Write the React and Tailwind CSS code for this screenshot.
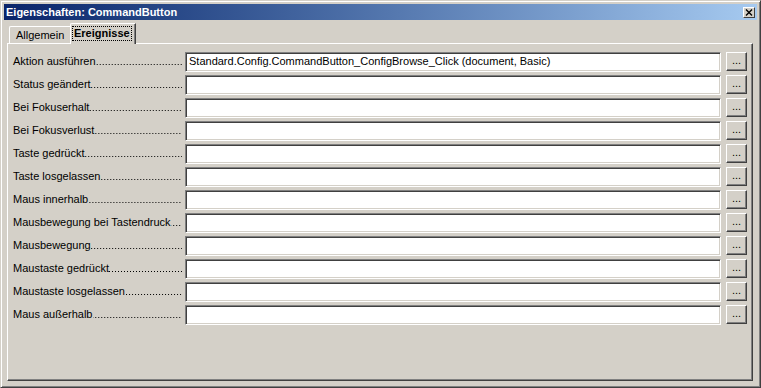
import React from "react";

const rows = [
  ["Aktion ausführen", "Standard.Config.CommandButton_ConfigBrowse_Click (document, Basic)"],
  ["Status geändert", ""],
  ["Bei Fokuserhalt", ""],
  ["Bei Fokusverlust", ""],
  ["Taste gedrückt", ""],
  ["Taste losgelassen", ""],
  ["Maus innerhalb", ""],
  ["Mausbewegung bei Tastendruck", ""],
  ["Mausbewegung", ""],
  ["Maustaste gedrückt", ""],
  ["Maustaste losgelassen", ""],
  ["Maus außerhalb", ""],
];

function Row({ label, value }) {
  return (
    <div className="flex items-center h-[23px]">
      <div className="w-[169px] flex items-baseline whitespace-nowrap text-black">
        <span>{label}</span>
        <span className="flex-1 h-[9px] self-baseline bg-[linear-gradient(to_right,transparent_1px,black_1px,black_2px,transparent_2px)] bg-[length:3px_1px] bg-repeat-x bg-bottom"></span>
      </div>
      <div className="ml-[3px] w-[536px] h-[20px] bg-white border border-t-[#808080] border-l-[#808080] border-b-white border-r-white shadow-[inset_1px_1px_0_#404040,inset_-1px_-1px_0_#d4d0c8] flex items-center pl-[3px] whitespace-nowrap overflow-hidden">
        {value}
      </div>
      <div className="ml-[5px] w-[21px] h-[19px] bg-[#d4d0c8] border border-t-white border-l-white border-b-[#404040] border-r-[#404040] shadow-[inset_-1px_-1px_0_#808080] flex items-center justify-center text-black leading-none pb-[2px]">
        ...
      </div>
    </div>
  );
}

export default function App() {
  return (
    <div
      className="w-[761px] h-[388px] bg-[#d4d0c8] flex flex-col border border-t-[#d4d0c8] border-l-[#d4d0c8] border-b-[#404040] border-r-[#404040] shadow-[inset_1px_1px_0_white,inset_-1px_-1px_0_#808080] p-[3px] text-[11px]"
      style={{ fontFamily: '"Liberation Sans", Arial, sans-serif' }}
    >
      {/* Title bar */}
      <div className="h-[16px] bg-gradient-to-r from-[#0a246a] to-[#a6caf0] flex items-center pl-[2px] pr-[2px]">
        <span className="text-white font-bold text-[11px] leading-none">Eigenschaften: CommandButton</span>
        <div className="ml-auto w-[12px] h-[11px] bg-[#d4d0c8] border border-t-white border-l-white border-b-[#404040] border-r-[#404040] flex items-center justify-center">
          <svg width="8" height="7" viewBox="0 0 8 7">
            <path d="M1 0.5 L7 6.5 M7 0.5 L1 6.5" stroke="black" strokeWidth="1.4" />
          </svg>
        </div>
      </div>

      {/* Tabs */}
      <div className="flex items-end h-[23px] pl-[5px]">
        <div className="h-[17px] w-[61px] bg-[#d4d0c8] border-t border-l border-t-white border-l-white rounded-tl-[2px] flex items-center pl-[6px]">
          <span className="text-black">Allgemein</span>
        </div>
        <div className="h-[21px] w-[66px] bg-[#d4d0c8] border-t border-l border-r border-t-white border-l-white border-r-[#404040] shadow-[inset_-1px_0_0_#808080] rounded-tl-[2px] flex items-center pl-[2px] relative z-10 -mb-[1px] pb-[1px]">
          <span className="font-bold text-black outline-1 outline-dotted outline-black px-[1px] leading-[13px]">Ereignisse</span>
        </div>
      </div>

      {/* Panel */}
      <div className="flex-1 ml-[3px] mr-[4px] mb-[3px] border border-t-white border-l-white border-b-[#404040] border-r-[#404040] shadow-[inset_-1px_-1px_0_#808080] pt-[6px] pl-[5px]">
        {rows.map(([l, v], i) => (
          <Row key={i} label={l} value={v} />
        ))}
      </div>
    </div>
  );
}
